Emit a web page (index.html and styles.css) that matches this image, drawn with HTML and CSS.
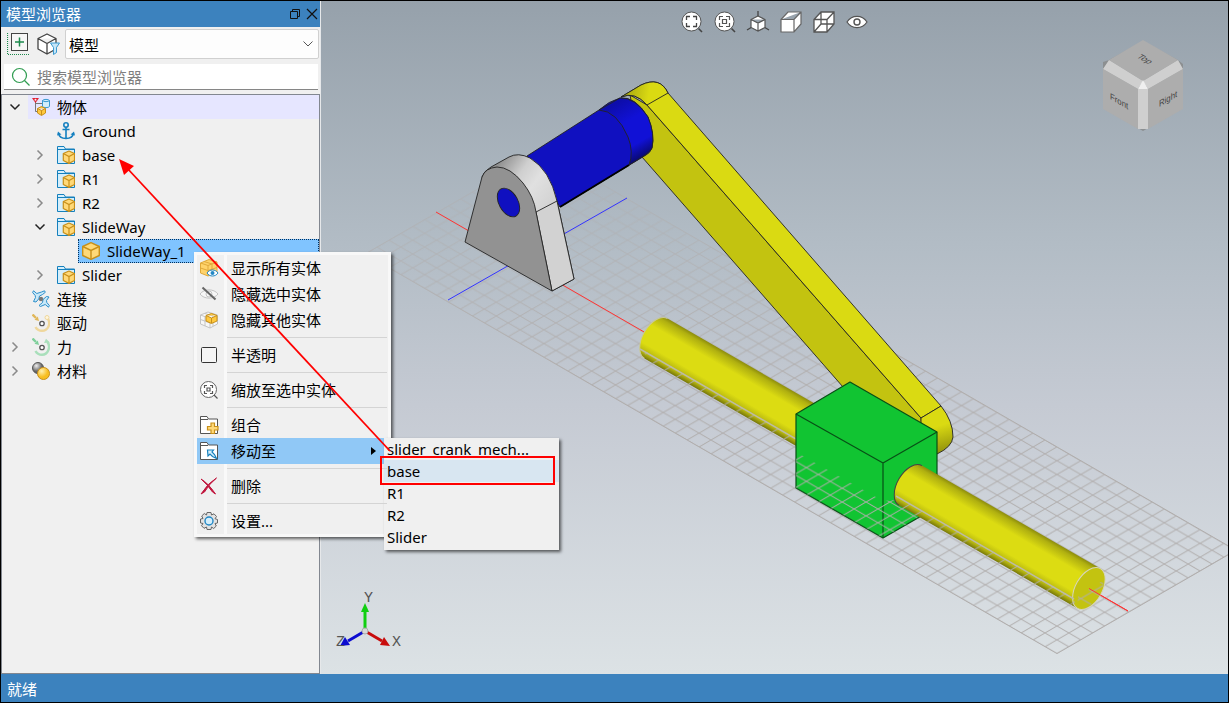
FILE: index.html
```html
<!DOCTYPE html>
<html lang="zh-CN">
<head>
<meta charset="utf-8">
<title>模型浏览器</title>
<link rel="stylesheet" href="styles.css">
</head>
<body>
<svg class="defs" aria-hidden="true">
  <symbol id="cube" viewBox="0 0 18 18">
    <path d="M9 .7 17.300 4.500V13.500L9 17.300 .7 13.500V4.500Z" fill="#ffd978" stroke="#c8901a" stroke-width="1.400" stroke-linejoin="round"/>
    <path d="M.7 4.500 9 8.500 17.300 4.500M9 8.500V17" fill="none" stroke="#c8901a" stroke-width="1.400"/>
  </symbol>
  <symbol id="part" viewBox="0 0 18 18">
    <path d="M.5 17.500V.5H7L8.500 3H17.500V17.500Z" fill="#d4eefb" stroke="#1580bd"/>
    <path d="M.5 3.500H17" stroke="#1580bd"/>
    <path d="M12 5 17.500 7.500V14.500L12 17.400 6.300 14.500V7.500Z" fill="#ffd978" stroke="#c8901a" stroke-width="1.200" stroke-linejoin="round"/>
    <path d="M6.300 7.500 12 10.500 17.500 7.500M12 10.500V17" fill="none" stroke="#c8901a" stroke-width="1.200"/>
  </symbol>
  <symbol id="right" viewBox="0 0 12 12"><path d="M3.500 1.500 8 6 3.500 10.500" fill="none" stroke="#8a8a8a" stroke-width="1.500"/></symbol>
  <symbol id="down" viewBox="0 0 12 12"><path d="M1.500 3.500 6 8 10.500 3.500" fill="none" stroke="#222" stroke-width="1.500"/></symbol>
</svg>

<div class="workspace">
  <aside class="panel">
    <header class="title">
      <h1>模型浏览器</h1>
      <button aria-label="浮动"><svg width="12" height="12" viewBox="0 0 12 12"><path d="M1.500 3.500H8.500V10.500H1.500ZM3.500 3V1.500H10.500V8.500H9" fill="none" stroke="#111"/></svg></button>
      <button aria-label="关闭"><svg width="12" height="12" viewBox="0 0 12 12"><path d="M1 1 11 11M11 1 1 11" stroke="#111" stroke-width="1.200"/></svg></button>
    </header>
    <div class="tools">
      <button aria-label="展开"><svg width="24" height="24" viewBox="0 0 24 24"><path d="M.5 1V22.500H22" fill="none" stroke="#1d8a4d" stroke-width="1.200" stroke-dasharray="1 1"/><rect x="4.500" y="1.500" width="16" height="17" fill="#f7f7f7" stroke="#444"/><path d="M12.500 5.500V14.500M8 10H17" stroke="#1d8a4d" stroke-width="1.500"/></svg></button>
      <button aria-label="筛选"><svg width="24" height="24" viewBox="0 0 24 24"><path d="M11 2 20 6.500V17L11 22 2 17V6.500Z M2 6.500 11 11.500 20 6.500M11 11.500V22" fill="#fff" stroke="#444" stroke-width="1.300" stroke-linejoin="round"/><path d="M14.500 11H23.500L20.500 15.500V20.500L17.500 22.500V15.500Z" fill="#c6e6f8" stroke="#3b9ad0"/></svg></button>
      <div class="combo">
        <select aria-label="视图"><option>模型</option></select>
        <svg width="12" height="12" viewBox="0 0 12 12"><path d="M1.500 3.500 6 8 10.500 3.500" fill="none" stroke="#555"/></svg>
      </div>
    </div>
    <label class="search">
      <svg width="20" height="20" viewBox="0 0 20 20"><circle cx="8.500" cy="8.500" r="7" fill="none" stroke="#2f9c50" stroke-width="1.200"/><path d="M13.500 13.500 18.500 18.500" stroke="#2f9c50" stroke-width="1.300"/></svg>
      <input type="text" aria-label="搜索" placeholder="搜索模型浏览器">
    </label>
    <ul class="tree">
      <li class="row">
        <button class="toggle" aria-label="折叠"><svg><use href="#down"/></svg></button>
        <span class="node hot"><svg class="icon" viewBox="0 0 18 18"><path d="M3.500 2V13.500H8M3.500 5.500H10" fill="none" stroke="#777"/><path d="M0 0H7L3.500 5Z" fill="#e22334"/><circle cx="3.500" cy="1.700" r="1" fill="#f0f0f0"/><path d="M10.500 2.500V8.500C11.500 10 16.500 10 17.500 8.500V2.500C16.500 1 11.500 1 10.500 2.500C11.500 4 16.500 4 17.500 2.500" fill="#d4eefb" stroke="#3b9ad0"/><path d="M9.500 8.500 13.500 10.500V15L9.500 17.500 5.500 15V10.500Z M5.500 10.500 9.500 12.500 13.500 10.500M9.500 12.500V17" fill="#ffc93f" stroke="#c8901a"/></svg>物体</span>
      </li>
      <li class="row l1">
        <span class="toggle"></span>
        <span class="node"><svg class="icon" viewBox="0 0 18 18"><g fill="none" stroke="#1580c0" stroke-width="1.600"><circle cx="9" cy="3" r="2.200"/><path d="M9 5V16.500M5.500 7.500H12.500M1.500 11C2 15 5 16.500 9 16.500S16 15 16.500 11"/></g><path d="M0 13.500 1 9.500 4.500 12.500ZM18 13.500 17 9.500 13.500 12.500Z" fill="#1580c0"/></svg>Ground</span>
      </li>
      <li class="row l1"><button class="toggle" aria-label="展开"><svg><use href="#right"/></svg></button><span class="node"><svg class="icon"><use href="#part"/></svg>base</span></li>
      <li class="row l1"><button class="toggle" aria-label="展开"><svg><use href="#right"/></svg></button><span class="node"><svg class="icon"><use href="#part"/></svg>R1</span></li>
      <li class="row l1"><button class="toggle" aria-label="展开"><svg><use href="#right"/></svg></button><span class="node"><svg class="icon"><use href="#part"/></svg>R2</span></li>
      <li class="row l1"><button class="toggle" aria-label="折叠"><svg><use href="#down"/></svg></button><span class="node"><svg class="icon"><use href="#part"/></svg>SlideWay</span></li>
      <li class="row l2"><span class="toggle"></span><span class="node selected"><svg class="icon"><use href="#cube"/></svg>SlideWay_1</span></li>
      <li class="row l1"><button class="toggle" aria-label="展开"><svg><use href="#right"/></svg></button><span class="node"><svg class="icon"><use href="#part"/></svg>Slider</span></li>
      <li class="row">
        <span class="toggle"></span>
        <span class="node"><svg class="icon" viewBox="0 0 18 18"><g fill="#c9e8f8" stroke="#2b8fcb" stroke-linejoin="round"><path d="M1.500 .8 4.800 3.500 9.500 2 12.500 .8 13.300 2.300 10.500 4.500 7.500 6 6.800 8.800 4 12 1.500 11.500 3.500 7.500 3.200 5.500 .6 2.500Z"/><path d="M16.500 17.200 13.200 14.500 8.500 16.500 7 15.500 10.500 12.500 11 9.500 14.500 6.500 17 7 14.500 10.500 14.800 12.500 17.400 15.500Z"/></g><circle cx="9" cy="9" r="2.200" fill="#777"/></svg>连接</span>
      </li>
      <li class="row">
        <span class="toggle"></span>
        <span class="node"><svg class="icon" viewBox="0 0 18 18"><path d="M16 5C19 10 16 16.500 10 16.800 7 16.800 4.500 15 3.500 13" fill="none" stroke="#efd79c" stroke-width="2.400"/><circle cx="15" cy="3.500" r="2" fill="#fff6dc" stroke="#efd79c"/><path d="M.5.5 4 4" stroke="#e0b75a" stroke-width="2.400"/><path d="M7 7 2.500 5.800 5.800 2.500Z" fill="#e0b75a"/><circle cx="10" cy="9.500" r="2.200" fill="#fff" stroke="#555" stroke-width="1.300"/></svg>驱动</span>
      </li>
      <li class="row">
        <button class="toggle" aria-label="展开"><svg><use href="#right"/></svg></button>
        <span class="node"><svg class="icon" viewBox="0 0 18 18"><path d="M15.500 4C19 9 16 16.500 10 16.800 7 16.800 4.500 15 3.500 13" fill="none" stroke="#a9dfbb" stroke-width="2.400"/><path d="M12 5 14 .8 17.800 4.500Z" fill="#a9dfbb"/><path d="M.5.5 4 4" stroke="#7fcf9b" stroke-width="2.400"/><path d="M7 7 2.500 5.800 5.800 2.500Z" fill="#7fcf9b"/><circle cx="10" cy="9.500" r="2.200" fill="#fff" stroke="#555" stroke-width="1.300"/></svg>力</span>
      </li>
      <li class="row">
        <button class="toggle" aria-label="展开"><svg><use href="#right"/></svg></button>
        <span class="node"><svg class="icon" viewBox="0 0 18 18"><circle cx="6" cy="6" r="5.500" fill="url(#steel)" stroke="#555"/><circle cx="11.500" cy="11.500" r="6" fill="url(#gold)" stroke="#c8901a"/></svg>材料</span>
      </li>
    </ul>
  </aside>

  <main class="view">
    <svg class="scene" viewBox="321 1 907 673" preserveAspectRatio="xMinYMin slice">
      <defs>
        <radialGradient id="steel" cx=".35" cy=".3"><stop offset="0" stop-color="#eee"/><stop offset="1" stop-color="#666"/></radialGradient>
        <radialGradient id="gold" cx=".35" cy=".3"><stop offset="0" stop-color="#fff0b0"/><stop offset="1" stop-color="#f8be20"/></radialGradient>
        <pattern id="mesh" patternUnits="userSpaceOnUse" x="365" y="254" width="23.860" height="13.780">
          <path d="M-2 -1.155 25.860 14.935M-2 14.935 25.860 -1.155" stroke="#b0adac"/>
        </pattern>
        <linearGradient id="fade" x1="0" y1="151" x2="0" y2="380" gradientUnits="userSpaceOnUse"><stop offset="0" stop-color="#fff" stop-opacity=".25"/><stop offset="1" stop-color="#fff"/></linearGradient>
        <mask id="far" maskUnits="userSpaceOnUse" x="321" y="1" width="920" height="673"><rect x="321" y="1" width="920" height="673" fill="url(#fade)"/></mask>
        <linearGradient id="tube" x1="0" y1="0" x2="0" y2="1"><stop offset="0" stop-color="#8d8d0c"/><stop offset=".08" stop-color="#b0b010"/><stop offset=".3" stop-color="#dcdc12"/><stop offset=".72" stop-color="#dcdc12"/><stop offset=".9" stop-color="#b4b410"/><stop offset="1" stop-color="#77770a"/></linearGradient>
        <linearGradient id="cap" x1="500" y1="160" x2="556" y2="200" gradientUnits="userSpaceOnUse"><stop offset="0" stop-color="#8e8e8e"/><stop offset=".35" stop-color="#cfcfcf"/><stop offset=".6" stop-color="#e0e0e0"/><stop offset="1" stop-color="#d2d2d2"/></linearGradient>
        <linearGradient id="shaft" x1="622" y1="100" x2="652" y2="152" gradientUnits="userSpaceOnUse"><stop offset="0" stop-color="#0d0dab"/><stop offset=".35" stop-color="#1111d6"/><stop offset=".75" stop-color="#1111d6"/><stop offset="1" stop-color="#09096f"/></linearGradient>
        <linearGradient id="knee" x1="625" y1="90" x2="665" y2="96" gradientUnits="userSpaceOnUse"><stop offset="0" stop-color="#a6a610"/><stop offset=".6" stop-color="#dada12"/></linearGradient>
        <linearGradient id="foot" x1="942" y1="425" x2="950" y2="452" gradientUnits="userSpaceOnUse"><stop offset="0" stop-color="#dada12"/><stop offset="1" stop-color="#8d8d0c"/></linearGradient>
      </defs>

      <path d="M365 254 1057 653.600 1236 550.300 544 150.700Z" fill="url(#mesh)" stroke="#b0adac" mask="url(#far)"/>
      <path d="M436 212 1128 611" stroke="#f33"/>
      <path d="M448 300 627 198" stroke="#33f"/>

      <g stroke="#222" stroke-width=".9" stroke-linejoin="round">
        <path d="M630 95 642 157 843 387 922 432 921 418 647 105Z" fill="#c3c310"/>
        <path d="M621 97 641 85Q660 76 668 93L941 406 921 418 647 105Q635 91 621 97Z" fill="#dada12"/>
        <path d="M621 97 641 85Q660 76 668 93L647 105Q635 91 621 97Z" fill="url(#knee)"/>
        <path d="M941 406Q953 421 953 437 952 447 937 454L921 445V418Z" fill="url(#foot)"/>
        <path d="M527 156 599 110Q609 101 620 98 635 96 648 117 655 134 652 148 650 153 646 155L560 207Z" fill="#1010c0"/>
        <path d="M599 110 620 98Q635 97 648 117 655 134 652 148 650 153 629 165 634 152 628 137 617 111 599 110Z" fill="url(#shaft)"/>
        <path d="M560 207 629 165" stroke="#000" stroke-width="2"/>
        <path d="M482 177Q484 171 491 167L509 157Q518 152 530 158 550 170 557 201L574 279 552 291Z" fill="url(#cap)"/>
        <path d="M536 212 557 201 574 279 552 291Z" fill="#d2d2d2"/>
        <path d="M465 242 482 177Q485 168 497 167 510 167 523 183 534 197 536 212L552 291Z" fill="#929292"/>
        <ellipse cx="508.500" cy="202.500" rx="9.500" ry="15.500" transform="rotate(-29 508.500 202.500)" fill="#1010c0"/>
      </g>

      <g transform="translate(656 338.500) rotate(30)">
        <path d="M0 -23H200V23H0A13.300 23 0 0 1 0 -23Z" fill="url(#tube)"/>
        <path d="M0 23A13.300 23 0 0 1 0 -23" fill="none" stroke="#c9c997"/>
      </g>
      <clipPath id="c1"><path d="M640 348 796 439V446L652 363Z"/></clipPath>
      <rect x="630" y="340" width="170" height="110" fill="url(#mesh)" clip-path="url(#c1)"/>
      <path d="M640 349 796 439" stroke="#bdbba4" stroke-width="1.500"/>

      <g stroke="#084f16" stroke-width="1.200" stroke-linejoin="round">
        <path d="M796 414 850 382 937 432V507L883 538 796 488Z" fill="#11c432"/>
        <path d="M796 414 883 463 937 432M883 463V538" fill="none"/>
      </g>
      <clipPath id="c2"><path d="M796 452 883 501 896 500 918 518 883 538 796 488Z"/></clipPath>
      <rect x="790" y="440" width="140" height="100" fill="url(#mesh)" clip-path="url(#c2)"/>

      <g transform="translate(910.500 485.500) rotate(30)">
        <path d="M0 -23H206V23H0A13.300 23 0 0 1 0 -23Z" fill="url(#tube)"/>
        <path d="M0 23A13.300 23 0 0 1 0 -23" fill="none" stroke="#444"/>
        <ellipse cx="206" cy="0" rx="13.300" ry="23" fill="#c3c310" stroke="#d6d5bd"/>
      </g>
      <clipPath id="c3"><path d="M896 496 1074 598 1077 609 899 506Z M1077 609A13 23 30 0 0 1104 580L1078 596Z"/></clipPath>
      <rect x="890" y="490" width="220" height="125" fill="url(#mesh)" clip-path="url(#c3)"/>
      <path d="M896 496 1074 599" stroke="#bdbba4" stroke-width="1.500"/>
      <path d="M1089 588.500 1128 611" stroke="#f33"/>

      <g class="navcube">
        <path d="M1103 66V62L1109 60 1143 41 1178 60 1183 64V108L1143 131 1103 108Z" fill="#8c8f91"/>
        <path d="M1143 40 1178 60 1143 81 1109 60Z" fill="#adadad"/>
        <path d="M1103 69 1138 89V129L1103 109Z" fill="#adadad"/>
        <path d="M1148 89 1183 69V109L1148 129Z" fill="#adadad"/>
        <path d="M1109 60 1143 81 1138 89 1103 69ZM1178 60 1143 81 1148 89 1183 69ZM1138 89H1148V129H1138Z" fill="#cfcfcf"/>
        <path d="M1143 80 1148 89H1138Z" fill="#efefef"/>
        <text transform="matrix(.866 .5 -.866 .5 1136 57)">Top</text>
        <text transform="matrix(.866 .5 0 1 1110 99)">Front</text>
        <text transform="matrix(.866 -.5 0 1 1159 107)">Right</text>
      </g>

      <g class="axes">
        <path d="M365 631V611" stroke="#10cf10" stroke-width="3"/><path d="M361 612 365 603 369 612Z" fill="#10cf10"/>
        <path d="M365 631 382 641" stroke="#c80c0c" stroke-width="3"/><path d="M384 637 390 646 380 645Z" fill="#c80c0c"/>
        <path d="M365 631 348 641" stroke="#0c0cd0" stroke-width="3"/><path d="M345 637 340 646 350 645Z" fill="#0c0cd0"/>
        <circle cx="365" cy="631" r="3" fill="#d8d8d8" stroke="#aaa"/>
        <text x="364" y="602">Y</text><text x="392" y="646">X</text><text x="336" y="646">Z</text>
      </g>
    </svg>
    <nav class="viewbar">
      <button aria-label="缩放至全部"><svg viewBox="0 0 24 24"><circle cx="11.500" cy="11.500" r="9.500" fill="#fff" stroke="#555"/><path d="M18.500 18.500 22 22" stroke="#444" stroke-width="1.600"/><path d="M6.500 10V6.500H10M13 6.500H16.500V10M16.500 13V16.500H13M10 16.500H6.500V13" fill="none" stroke="#444" stroke-width="1.300"/></svg></button>
      <button aria-label="缩放至选中"><svg viewBox="0 0 24 24"><circle cx="11.500" cy="11.500" r="9.500" fill="#fff" stroke="#555"/><path d="M18.500 18.500 22 22" stroke="#444" stroke-width="1.600"/><path d="M6.500 10V6.500H10M13 6.500H16.500V10M16.500 13V16.500H13M10 16.500H6.500V13M9.500 9.500H13.500V13.500H9.500Z" fill="none" stroke="#555" stroke-width="1.200"/></svg></button>
      <button aria-label="等轴测"><svg viewBox="0 0 24 24"><path d="M12 7V1M6 17 1 20M18 17 23 20" stroke="#444" stroke-width="1.300"/><path d="M12 6 19 9.500V17.500L12 21 5 17.500V9.500Z M5 9.500 12 13 19 9.500M12 13V21" fill="#fff" stroke="#555" stroke-width="1.200"/></svg></button>
      <button aria-label="着色"><svg viewBox="0 0 24 24"><path d="M2 9.500 9 2H22V14L15 22H2Z M2 9.500H15L22 2M15 9.500V22" fill="#fff" stroke="#666" stroke-width="1.200"/></svg></button>
      <button aria-label="线框"><svg viewBox="0 0 24 24"><path d="M2 9.500 9 2H22V14L15 22H2Z" fill="#fff"/><path d="M2 9.500 9 2H22V14L15 22H2Z M2 9.500H15L22 2M15 9.500V22M9 2V14H22M9 14 2 22" fill="none" stroke="#555" stroke-width="1.300"/></svg></button>
      <button aria-label="可见性"><svg viewBox="0 0 24 24"><path d="M2 12C7 4.500 17 4.500 22 12 17 19.500 7 19.500 2 12Z" fill="#fff" stroke="#555" stroke-width="1.200"/><circle cx="12" cy="12" r="3" fill="none" stroke="#555" stroke-width="1.400"/></svg></button>
    </nav>
  </main>
</div>

<footer class="status">就绪</footer>

<ul class="menu">
  <li><button><svg viewBox="0 0 20 20"><path d="M1.500 5 10 1.500 18 4V14L9 18 1.500 15Z" fill="#ffd36a" stroke="#e0a93a"/><path d="M1.500 5 9 7.500 18 4M9 7.500V18M1.500 10 9 12.500 18 9.500M5 3.500 13 6V15" fill="none" stroke="#e0a93a"/><path d="M8 15C10.500 11 16.500 11 19 15 16.500 19 10.500 19 8 15Z" fill="#fff" stroke="#2287c4"/><circle cx="13.500" cy="15" r="2" fill="#2287c4"/></svg>显示所有实体</button></li>
  <li><button><svg viewBox="0 0 20 20"><path d="M1 10C5 4.500 15 4.500 19 10 15 15.500 5 15.500 1 10Z" fill="#f7f7f7" stroke="#c4c4c4"/><circle cx="10" cy="10" r="3" fill="none" stroke="#c4c4c4"/><path d="M3.500 3.500 16.500 15.500" stroke="#666" stroke-width="2"/></svg>隐藏选中实体</button></li>
  <li><button><svg viewBox="0 0 20 20"><path d="M1.500 5 9 2 18.500 5V14L11 18 1.500 14ZM1.500 5 11 8.500V18M1.500 9.500 11 13 18.500 9.500M6 6.500V16M6 3.500 14 6V16" fill="#f7f7f7" stroke="#c4c4c4"/><path d="M12.500 3.500 18 5.500V11L12.500 13.500 7 11V5.500Z M7 5.500 12.500 8 18 5.500M12.500 8V13" fill="#ffc93f" stroke="#c8901a"/></svg>隐藏其他实体</button></li>
  <li class="sep"></li>
  <li><button><svg viewBox="0 0 20 20"><rect x="2.500" y="2.500" width="15" height="15" rx="1" fill="#f5f5f5" stroke="#333"/></svg>半透明</button></li>
  <li class="sep"></li>
  <li><button><svg viewBox="0 0 20 20"><circle cx="9.500" cy="9.500" r="8" fill="#fff" stroke="#666"/><path d="M15 15 18.500 18.500M5.500 8V5.500H8M11 5.500H13.500V8M13.500 11V13.500H11M8 13.500H5.500V11M8 8H11V11H8Z" fill="none" stroke="#555" stroke-width="1.200"/></svg>缩放至选中实体</button></li>
  <li class="sep"></li>
  <li><button><svg viewBox="0 0 20 20"><path d="M1.500 18.500V1.500H8L9.500 4H18.500V18.500Z M1.500 4.500H9" fill="#fff" stroke="#555"/><path d="M12 8H15.500V11.500H19V15H15.500V18.500H12V15H8.500V11.500H12Z" fill="#ffd978" stroke="#c8901a" stroke-width="1.200"/></svg>组合</button></li>
  <li class="active"><button aria-haspopup="true"><svg viewBox="0 0 20 20"><path d="M1.500 18.500V1.500H8L9.500 4H18.500V18.500Z M1.500 4.500H9" fill="#fff" stroke="#555"/><path d="M8.500 9H14.500L13 11 15.500 13.500 17.500 17.500 13.500 15.500 11 13 9 15Z" fill="#d4eefb" stroke="#1580bd" stroke-width="1.200"/></svg>移动至<span class="more"></span></button>
    <ul class="submenu">
      <li><button>slider_crank_mech...</button></li>
      <li class="hover"><button>base</button></li>
      <li><button>R1</button></li>
      <li><button>R2</button></li>
      <li><button>Slider</button></li>
    </ul>
  </li>
  <li class="sep"></li>
  <li><button><svg viewBox="0 0 20 20"><path d="M2 3Q9 7 16.500 18L13.500 16Q8 8 2 3ZM17.500 2Q9 7 2 18L5.500 16Q10 8 17.500 2Z" fill="#c0143c" stroke="#c0143c"/></svg>删除</button></li>
  <li class="sep"></li>
  <li><button><svg viewBox="0 0 20 20"><path d="M8 1.500H12L12.500 4 15 2.800 17.500 5.500 16 7.700 18.500 8.500V12L16 12.500 17.300 15 14.700 17.500 12.500 16 12 18.500H8L7.500 16 5 17.300 2.500 14.700 4 12.500 1.500 12V8L4 7.500 2.700 5 5.300 2.500 7.500 4Z" fill="#e2e2e2" stroke="#666"/><circle cx="10" cy="10" r="4" fill="#d4eefb" stroke="#2287c4" stroke-width="1.400"/></svg>设置...</button></li>
</ul>

<svg class="notes" viewBox="0 0 560 490" aria-hidden="true">
  <path d="M390 451 127 168" stroke="#f00" stroke-width="1.800"/>
  <path d="M119 159 134 166 124 175Z" fill="#f00"/>
  <rect x="381" y="457" width="173" height="27" fill="none" stroke="#f00" stroke-width="2"/>
</svg>
</body>
</html>
```
FILE: styles.css
```css
* { box-sizing: border-box; }

body {
  margin: 0;
  min-height: 100vh;
  display: flex;
  flex-direction: column;
  position: relative;
  border: 1px solid #000;
  background: #f0f0f0;
  color: #000;
  font: 15px/24px "Noto Sans", "Noto Sans CJK SC", sans-serif;
}

button, input, select { font: inherit; color: inherit; }
button { border: 0; padding: 0; background: none; display: flex; align-items: center; }
ul { list-style: none; margin: 0; padding: 0; }
svg { display: block; flex: none; }
.defs { position: absolute; width: 0; height: 0; }

.workspace { flex: 1; display: flex; min-height: 0; }

.panel {
  width: 320px;
  display: flex;
  flex-direction: column;
  border-right: 1px solid #e6e8ea;
}

.title {
  height: 26px;
  display: flex;
  align-items: center;
  gap: 5px;
  padding: 0 2px 0 5px;
  background: #3c82be;
  color: #fff;
}
.title h1 { flex: 1; margin: 0; font-size: 15px; font-weight: 400; }

.tools { display: flex; align-items: center; gap: 5px; padding: 2px 1px 0 6px; }
.combo { flex: 1; position: relative; height: 30px; }
.combo select {
  width: 100%;
  height: 30px;
  padding: 1px 3px 0;
  border: 1px solid #d0d0d0;
  border-radius: 2px;
  background: #fdfdfd;
  appearance: none;
}
.combo svg { position: absolute; right: 5px; top: 9px; pointer-events: none; }

.search {
  height: 26px;
  margin: 5px 2px 4px 3px;
  padding-left: 7px;
  display: flex;
  align-items: center;
  gap: 6px;
  background: #fff;
  border-bottom: 1px solid #868686;
}
.search input { flex: 1; min-width: 0; border: 0; padding: 0; background: none; outline: 0; }
.search input::placeholder { color: #808080; opacity: 1; }

.tree { flex: 1; border: 1px solid #828790; }
.row { display: flex; height: 24px; padding-left: 3px; }
.l1 { padding-left: 28px; }
.l2 { padding-left: 53px; }
.toggle { width: 20px; margin-right: 3px; justify-content: center; }
.toggle svg { width: 12px; height: 12px; }
.node { flex: 1; display: flex; align-items: center; gap: 7px; padding-left: 4px; }
.icon { width: 18px; height: 18px; }
.hot { background: #e6e6ff; }
.selected { background: #80c4ff; outline: 1px dotted #002f5c; outline-offset: -1px; }

.view { flex: 1; position: relative; min-width: 0; background: linear-gradient(#96a1ab, #b2bcc5 36%, #c5cad3 60%, #dce2e5); }
.scene { position: absolute; width: 100%; height: 100%; fill: none; }
.navcube text { font: 9px "Liberation Sans", sans-serif; fill: #444; }
.axes text { font: 15px "Liberation Mono", monospace; fill: #555; }

.viewbar { position: relative; display: flex; justify-content: center; padding-top: 9px; }
.viewbar button { width: 33px; height: 24px; justify-content: center; }
.viewbar svg { width: 24px; height: 24px; }

.status { height: 28px; padding: 3px 6px; background: #3c82be; color: #fff; }

.menu {
  position: absolute;
  left: 193px;
  top: 251px;
  width: 197px;
  border: 3px solid #f8f8f8;
  background: linear-gradient(90deg, #f0f0f0 27px, #f9f9f9 27px, #f9f9f9 30px, #f0f0f0 30px);
  box-shadow: 2px 2px 3px rgba(0, 0, 0, .6);
}
.menu li { position: relative; }
.menu button { width: 100%; height: 26px; gap: 12px; padding-left: 2px; }
.menu svg { width: 20px; height: 20px; }
.menu .sep { height: 9px; margin: 0 1px 0 30px; background: linear-gradient(#d4d4d4, #d4d4d4) 0 4px / 100% 1px no-repeat; }
.menu .active { background: #90c8f6; }
.more { margin: 0 12px 0 auto; border: 4px solid transparent; border-left: 5px solid #000; border-right: 0; }

.submenu {
  position: absolute;
  left: 187px;
  top: 0;
  width: 175px;
  padding-bottom: 2px;
  background: #f0f0f0;
  box-shadow: 2px 2px 3px rgba(0, 0, 0, .6);
}
.submenu button { height: 22px; padding-left: 3px; }
.submenu .hover { background: #d8e6f1; }

.notes { position: absolute; left: -1px; top: -1px; width: 560px; height: 490px; fill: none; pointer-events: none; }
```
